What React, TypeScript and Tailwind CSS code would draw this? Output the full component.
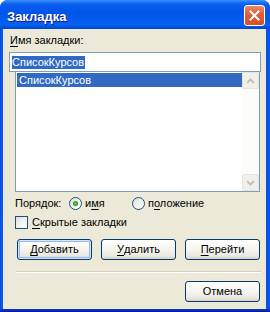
import { ReactNode } from "react";

function XPButton({ children, isDefault }: { children: ReactNode; isDefault?: boolean }) {
  return (
    <div
      className={
        isDefault
          ? "h-[21px] w-[75px] rounded-[3px] border border-[#003C74] bg-[linear-gradient(180deg,#FFFFFF_0%,#F4F3EE_55%,#E9E7DE_85%,#D6D0C5_100%)] shadow-[inset_0_0_0_1px_#CEE7FF,inset_0_0_0_2px_#98B8EA] flex items-center justify-center text-[11px] leading-[13px] text-black"
          : "h-[21px] w-[75px] rounded-[3px] border border-[#003C74] bg-[linear-gradient(180deg,#FFFFFF_0%,#F4F3EE_55%,#E9E7DE_85%,#D6D0C5_100%)] flex items-center justify-center text-[11px] leading-[13px] text-black"
      }
    >
      {children}
    </div>
  );
}

function Radio({ checked }: { checked?: boolean }) {
  return (
    <span className="w-[13px] h-[13px] shrink-0 rounded-full border border-[#1C5180] bg-[linear-gradient(135deg,#DCDCD4_0%,#F2F2EE_50%,#FFFFFF_100%)] flex items-center justify-center">
      {checked && <span className="w-[5px] h-[5px] rounded-full bg-[radial-gradient(circle,#5CD65C_0%,#21A121_60%,#1A8A1A_100%)]" />}
    </span>
  );
}

function ScrollArrow({ up }: { up?: boolean }) {
  return (
    <div className="h-[17px] w-[17px] rounded-[2px] border border-[#E6E4DC] bg-[#F1F0EA] flex items-center justify-center">
      <svg width="9" height="6" viewBox="0 0 9 6">
        <path
          d={up ? "M1 5 L4.5 1.5 L8 5" : "M1 1 L4.5 4.5 L8 1"}
          fill="none"
          stroke="#C7C5BA"
          strokeWidth="2"
        />
      </svg>
    </div>
  );
}

const u = "underline underline-offset-[2px] decoration-1";

export default function App() {
  return (
    <div className="w-[270px] h-[312px] bg-white font-['Liberation_Sans',Arial,sans-serif] text-[11px] leading-[13px] text-black">
      <div className="h-full flex flex-col rounded-t-[8px] overflow-hidden bg-[#0A53E6]">
        {/* title bar */}
        <div className="h-[29px] shrink-0 flex items-start bg-[linear-gradient(180deg,#3D91FF_0%,#0A5FF0_14%,#0055E8_45%,#0660F2_85%,#0046D2_100%)]">
          <span className="ml-[7px] mt-[9px] text-[13px] leading-[15px] font-bold text-white [text-shadow:1px_1px_0_#0A1883]">
            Закладка
          </span>
          <div className="ml-auto mr-[5px] mt-[5px] w-[21px] h-[21px] rounded-[3px] border border-white bg-[linear-gradient(180deg,#E88B6C_0%,#E0603A_40%,#D2502A_100%)] flex items-center justify-center">
            <svg width="11" height="11" viewBox="0 0 11 11">
              <path d="M1.5 1.5 L9.5 9.5 M9.5 1.5 L1.5 9.5" stroke="white" strokeWidth="2" strokeLinecap="square" />
            </svg>
          </div>
        </div>

        {/* body with side borders */}
        <div className="flex-1 flex flex-col pl-[3px] pr-[4px] bg-[linear-gradient(90deg,#0040D0_0px,#0A5AF0_1px,#0A53E6_100%)]">
          <div className="flex-1 flex flex-col bg-[#ECE9D8]">
            <div className="ml-[7px] mt-[5px] h-[13px]">
              <span className={u}>И</span>мя закладки:
            </div>

            <div className="ml-[6px] mt-[5px] w-[252px] h-[20px] border border-[#7F9DB9] bg-white flex items-center pl-[2px]">
              <span className="bg-[#316AC5] text-white h-[13px] pr-px">СписокКурсов</span>
            </div>

            <div className="ml-[12px] -mt-px w-[245px] h-[121px] border border-[#7F9DB9] bg-white flex">
              <div className="flex-1 pl-px pt-px">
                <div className="h-[14px] bg-[#316AC5] text-white pl-[2px] flex items-center">СписокКурсов</div>
              </div>
              <div className="w-[17px] bg-[#FCFCF9] flex flex-col justify-between">
                <ScrollArrow up />
                <ScrollArrow />
              </div>
            </div>

            <div className="ml-[12px] mt-[5px] h-[13px] flex items-center">
              <span className="w-[54px]">Порядок:</span>
              <span className="w-[63px] flex items-center">
                <Radio checked />
                <span className="ml-[3px]">
                  и<span className={u}>м</span>я
                </span>
              </span>
              <span className="flex items-center">
                <Radio />
                <span className="ml-[3px]">
                  п<span className={u}>о</span>ложение
                </span>
              </span>
            </div>

            <div className="ml-[12px] mt-[6px] h-[13px] flex items-center">
              <span className="w-[13px] h-[13px] border border-[#1C5180] bg-[linear-gradient(135deg,#DCDCD4_0%,#F2F2EE_50%,#FFFFFF_100%)]" />
              <span className="ml-[4px]">
                <span className={u}>С</span>крытые закладки
              </span>
            </div>

            <div className="ml-[14px] mt-[10px] flex gap-[9px]">
              <XPButton isDefault>
                <span className={u}>Д</span>обавить
              </XPButton>
              <XPButton>
                <span className={u}>У</span>далить
              </XPButton>
              <XPButton>
                <span className={u}>П</span>ерейти
              </XPButton>
            </div>

            <div className="ml-[13px] mt-[11px] w-[245px] h-[2px] border-t border-[#D0D0BF] border-b border-b-white" />

            <div className="ml-[182px] mt-[8px]">
              <XPButton>Отмена</XPButton>
            </div>
          </div>
        </div>
        <div className="h-[3px] shrink-0 bg-[linear-gradient(180deg,#0A3FD0_0%,#001A9E_100%)]" />
      </div>
    </div>
  );
}
